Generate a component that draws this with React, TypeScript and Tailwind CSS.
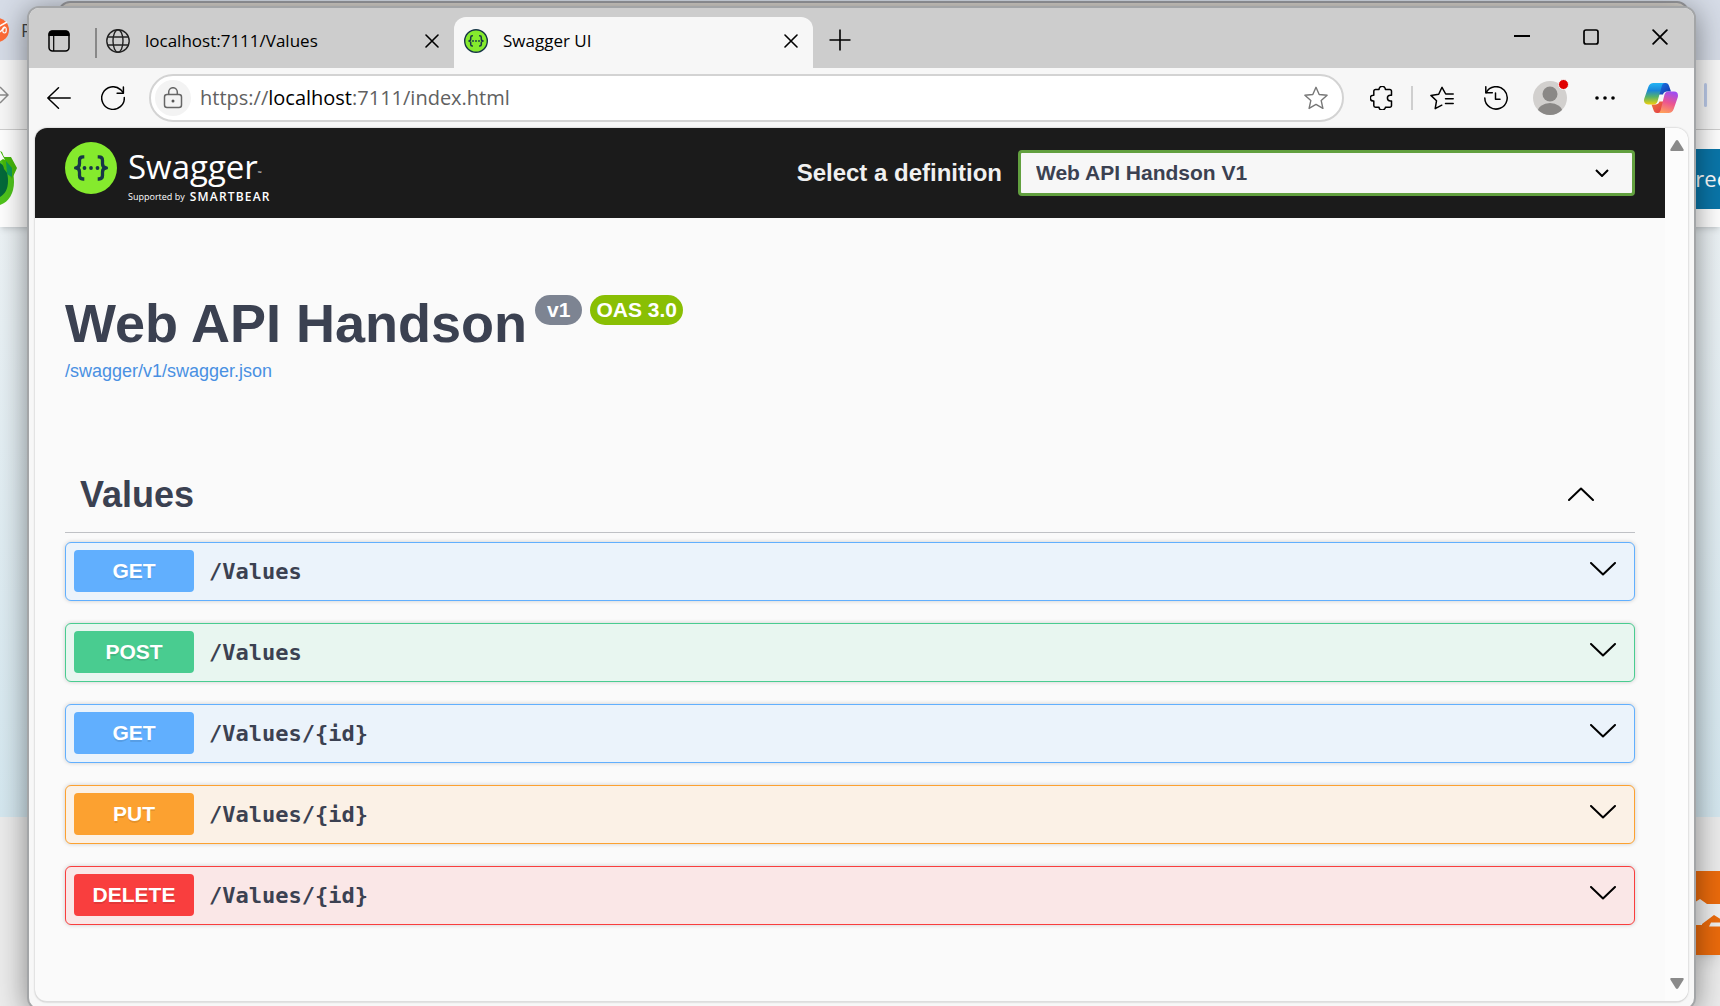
import React from "react";

type Method = "GET" | "POST" | "PUT" | "DELETE";

const methodStyles: Record<Method, { row: string; badge: string }> = {
  GET: { row: "border-[#61affe] bg-[#ebf3fb]", badge: "bg-[#61affe]" },
  POST: { row: "border-[#49cc90] bg-[#e8f6f0]", badge: "bg-[#49cc90]" },
  PUT: { row: "border-[#fca130] bg-[#fbf1e6]", badge: "bg-[#fca130]" },
  DELETE: { row: "border-[#f93e3e] bg-[#fae7e7]", badge: "bg-[#f93e3e]" },
};

const operations: { method: Method; path: string }[] = [
  { method: "GET", path: "/Values" },
  { method: "POST", path: "/Values" },
  { method: "GET", path: "/Values/{id}" },
  { method: "PUT", path: "/Values/{id}" },
  { method: "DELETE", path: "/Values/{id}" },
];

type IconProps = { className?: string };

function CloseIcon({ className }: IconProps) {
  return (
    <svg viewBox="0 0 14 14" className={className} fill="none" stroke="#000" strokeWidth="1.6" strokeLinecap="round">
      <path d="M1 1l12 12M13 1L1 13" />
    </svg>
  );
}

function WorkspacesIcon() {
  return (
    <svg viewBox="0 0 22 22" className="size-[22px]">
      <rect x="1" y="1" width="20" height="20" rx="3.5" fill="none" stroke="#000" strokeWidth="1.5" />
      <path d="M0.5 6V4a3.5 3.5 0 0 1 3.5-3.5h14A3.5 3.5 0 0 1 21.500 4v2z" fill="#000" />
      <path d="M5.700 6v15" stroke="#000" strokeWidth="1.2" />
    </svg>
  );
}

function GlobeIcon() {
  return (
    <svg viewBox="0 0 24 24" className="size-6 shrink-0" fill="none" stroke="#222" strokeWidth="1.4">
      <circle cx="12" cy="12" r="11.200" />
      <ellipse cx="12" cy="12" rx="5" ry="11.200" />
      <path d="M1.700 8h20.600M1.700 16h20.600" />
    </svg>
  );
}

function Braces({ className, ring }: IconProps & { ring?: boolean }) {
  return (
    <svg viewBox="0 0 52 52" className={className}>
      <circle cx="26" cy="26" r={ring ? 24.5 : 26} fill="#85ea2d" stroke={ring ? "#173647" : "none"} strokeWidth="3" />
      <g fill="none" stroke="#173647" strokeWidth="3.300" strokeLinejoin="round">
        <path d="M19.300 14.800H18c-2.600 0-3.500 1.200-3.500 3.400v3.600c0 2.600-1 4-3.900 4.100 2.900.1 3.900 1.500 3.900 4.100v3.600c0 2.200.9 3.400 3.500 3.400h1.300" />
        <path d="M32.700 14.800H34c2.600 0 3.500 1.200 3.500 3.400v3.600c0 2.600 1 4 3.900 4.100-2.900.1-3.900 1.500-3.900 4.100v3.600c0 2.200-.9 3.400-3.500 3.400h-1.300" />
      </g>
      <circle cx="19.500" cy="26" r="1.900" fill="#173647" />
      <circle cx="26" cy="26" r="1.900" fill="#173647" />
      <circle cx="32.500" cy="26" r="1.900" fill="#173647" />
    </svg>
  );
}

function BackIcon() {
  return (
    <svg viewBox="0 0 24 24" className="size-6" fill="none" stroke="#000" strokeWidth="1.5" strokeLinecap="round" strokeLinejoin="round">
      <path d="M23.200 12H.8M11.500 1.800L.8 12l10.700 10.200" />
    </svg>
  );
}

function RefreshIcon() {
  return (
    <svg viewBox="0 0 24 24" className="size-6" fill="none" stroke="#000" strokeWidth="1.5" strokeLinecap="round" strokeLinejoin="round">
      <path d="M23.300 11.500A11.300 11.300 0 1 1 19.500 3.600l2.500 2.700" />
      <path d="M22.400 1v6.200h-6.300" />
    </svg>
  );
}

function LockIcon() {
  return (
    <svg viewBox="0 0 20 22" className="h-[22px] w-5" fill="none" stroke="#666" strokeWidth="1.5">
      <rect x="1.500" y="7.500" width="17" height="13" rx="2.500" />
      <path d="M5.700 7.300V5a4.300 4.300 0 0 1 8.600 0v2.300" />
      <circle cx="10" cy="14" r="1.500" fill="#555" stroke="none" />
    </svg>
  );
}

function StarIcon() {
  return (
    <svg viewBox="0 0 24 24" className="size-6" fill="none" stroke="#777" strokeWidth="1.4" strokeLinejoin="round">
      <path d="M12 1.300l3.200 7.200 7.900.8-5.900 5.300 1.700 7.800-6.900-4-6.900 4 1.700-7.800L.9 9.300l7.900-.8z" />
    </svg>
  );
}

function PuzzleIcon() {
  return (
    <svg viewBox="0 0 24 24" className="size-6" fill="none" stroke="#000" strokeWidth="1.5" strokeLinejoin="round">
      <path d="M5.500 3.500H9a3.200 3.200 0 0 1 6.400 0h4.400a1.700 1.700 0 0 1 1.700 1.700v4h-1.200a2.900 2.900 0 0 0 0 5.800h1.200v4.600a1.700 1.700 0 0 1-1.700 1.700h-4.400a3.200 2.600 0 0 1-6.400 0H5.500a1.700 1.700 0 0 1-1.700-1.700V15h-.6a2.900 2.900 0 0 1 0-5.800h.6v-4a1.700 1.700 0 0 1 1.700-1.700z" />
    </svg>
  );
}

function FavoritesIcon() {
  return (
    <svg viewBox="0 0 24 24" className="size-6" fill="none" stroke="#000" strokeWidth="1.500" strokeLinejoin="round" strokeLinecap="round">
      <path d="M23.200 8h-7.500L12 1.300 8.700 8.300.9 9.400l5.600 5.400-1.300 7.900 6.600-3.500" />
      <path d="M15.500 12.700h7.700M15.500 17.500h7.700" />
    </svg>
  );
}

function HistoryIcon() {
  return (
    <svg viewBox="0 0 24 24" className="size-6" fill="none" stroke="#000" strokeWidth="1.5" strokeLinecap="round" strokeLinejoin="round">
      <path d="M2 6.800A11.200 11.200 0 1 1 .8 12" />
      <path d="M1.800 .8v6h6.500M11.500 7v6.200h4.500" />
    </svg>
  );
}

function AvatarIcon() {
  return (
    <svg viewBox="0 0 34 34" className="size-[34px]">
      <defs>
        <clipPath id="avatar-disc">
          <circle cx="17" cy="17" r="17" />
        </clipPath>
      </defs>
      <g clipPath="url(#avatar-disc)">
        <rect width="34" height="34" fill="#d2d0ce" />
        <circle cx="17" cy="13" r="7.500" fill="#8a8886" />
        <ellipse cx="17" cy="31.500" rx="12.500" ry="9.500" fill="#8a8886" />
      </g>
    </svg>
  );
}

function CopilotIcon() {
  return (
    <svg viewBox="0 0 34 30" className="h-[30px] w-[34px]">
      <defs>
        <linearGradient id="cp-left" x1="0" y1="0" x2="0" y2="1">
          <stop offset="0" stopColor="#22b4f4" />
          <stop offset=".35" stopColor="#1a86d8" />
          <stop offset=".65" stopColor="#58b368" />
          <stop offset="1" stopColor="#f0d00c" />
        </linearGradient>
        <linearGradient id="cp-top" x1="0" y1="0" x2="1" y2="1">
          <stop offset="0" stopColor="#1a7ce8" />
          <stop offset="1" stopColor="#1430a8" />
        </linearGradient>
        <linearGradient id="cp-right" x1=".6" y1="0" x2=".3" y2="1">
          <stop offset="0" stopColor="#a04df0" />
          <stop offset=".5" stopColor="#ec5590" />
          <stop offset="1" stopColor="#ffa05a" />
        </linearGradient>
        <linearGradient id="cp-bottom" x1="0" y1="0" x2="1" y2="1">
          <stop offset="0" stopColor="#f07838" />
          <stop offset="1" stopColor="#e0384a" />
        </linearGradient>
      </defs>
      <path d="M16 0h5.500c2 0 3 1 3.600 3l1.900 5.500h-4c-2 0-3.200.8-4 3l-5 0z" fill="url(#cp-top)" />
      <path d="M18 30h-5c-2 0-2.900-1-3.500-3L7.500 21.500h4c2 0 3.200-.8 4-3l4 0z" fill="url(#cp-bottom)" />
      <path d="M9.500 0H21c-1.700 0-2.600 1.200-3.200 3L13.500 18.500c-.7 2-2 3-4 3H4c-3.500 0-4.600-2.600-3.700-6L4.300 4C5.200 1.300 7 0 9.500 0z" fill="url(#cp-left)" />
      <path d="M24.500 30H13.500c1.700 0 2.600-1.200 3.200-3L20.500 11.500c.7-2 2-3 4-3H30c3.500 0 4.600 2.600 3.700 6L29.700 26c-.9 2.700-2.700 4-5.200 4z" fill="url(#cp-right)" />
    </svg>
  );
}

function Chevron({ up }: { up?: boolean }) {
  return (
    <svg viewBox="0 0 26 14" className="h-3.5 w-[26px]" fill="none" stroke="#000" strokeWidth="2" strokeLinecap="round" strokeLinejoin="round">
      <path d={up ? "M1 13L13 1.500 25 13" : "M1 1l12 11.500L25 1"} />
    </svg>
  );
}

function DesktopBackdrop() {
  return (
    <div aria-hidden="true" className="absolute inset-0 flex flex-col overflow-hidden bg-[#ececec]">
      <div className="flex h-[60px] shrink-0 items-center gap-3 bg-[#d6dce7]">
        <svg viewBox="0 0 9 24" className="h-6 w-[9px]">
          <circle cx="-3" cy="12" r="12" fill="#ff6c37" />
          <path d="M-2 9L7 4M0 14l5-5" stroke="#fff" strokeWidth="1.500" />
          <ellipse cx="4.500" cy="12" rx="1.800" ry="3" fill="none" stroke="#fff" strokeWidth="1.200" />
        </svg>
        <span className="text-lg text-[#444]">P</span>
      </div>
      <div className="flex h-[70px] shrink-0 items-center justify-between border-b border-[#cfcfcf] bg-[#f8f8f8]">
        <svg viewBox="0 0 9 18" className="h-[18px] w-[9px]" fill="none" stroke="#8a8a8a" strokeWidth="1.500">
          <path d="M0 9h8M0 1l8 8-8 8" />
        </svg>
        <span className="mr-[13px] h-6 w-[3px] rounded bg-[#bccbea]" />
      </div>
      <div className="relative flex h-[97px] shrink-0 items-center justify-between bg-white shadow-md">
        <svg viewBox="0 0 17 56" className="h-14 w-[17px]">
          <path d="M0 3C10 8 14 20 14 31S9 51 0 54z" fill="#4fc41c" />
          <path d="M0 12c6 4 8 10 8 18S5 43 0 46z" fill="#04693a" />
          <path d="M0 0l2 1 2 5h7l6 11-5 11-8-10z" fill="#46b80a" />
          <path d="M6 10l6 7 0 9-5-3z" fill="#0d9a55" />
          <path d="M0 0l5 9-2-1-3 2z" fill="#fff" />
        </svg>
        <span className="flex h-[60px] w-9 items-center bg-[#0a76a9] text-[22px] text-white">Free</span>
      </div>
      <div className="h-[590px] shrink-0 bg-linear-to-b from-[#edf3f6] to-[#d5e8f0]" />
      <div className="mt-[54px] flex h-[84px] w-7 shrink-0 items-center self-end bg-[#ec6b0c] shadow-lg">
        <svg viewBox="0 0 28 28" className="h-7 w-7">
          <path d="M0 5l8-5 7 5h13v22H0z" fill="#f0f0f0" />
          <path d="M10 28v-3l12-9 8 5v7zM0 28v-2h10v2z" fill="#ec6b0c" />
          <path d="M17 27.500l2-4h9v4z" fill="#f0f0f0" />
        </svg>
      </div>
    </div>
  );
}

function TabStrip() {
  return (
    <div className="flex h-[60px] shrink-0 items-end bg-[#cdcdcd] pt-2">
      <div className="flex h-[51px] flex-1 items-center">
        <button type="button" aria-label="Workspaces" className="ml-[19px] pb-1">
          <WorkspacesIcon />
        </button>
        <span className="ml-[25px] h-[30px] w-0.5 bg-[#888]" />
        <div className="flex h-full w-[357px] items-center pr-[15px] pb-1 pl-[9px]">
          <GlobeIcon />
          <span className="ml-[15px] flex-1 text-[17px]">localhost:7111/Values</span>
          <button type="button" aria-label="Close localhost:7111/Values">
            <CloseIcon className="size-3.5" />
          </button>
        </div>
        <div className="flex h-full w-[359px] items-center rounded-t-xl bg-[#f7f7f7] pr-[15px] pb-1 pl-2.5">
          <Braces className="size-6 shrink-0" ring />
          <span className="ml-[15px] flex-1 text-[17px]">Swagger UI</span>
          <button type="button" aria-label="Close Swagger UI">
            <CloseIcon className="size-3.5" />
          </button>
        </div>
        <button type="button" aria-label="New tab" className="ml-4 pb-1.5">
          <svg viewBox="0 0 22 22" className="size-[22px]" stroke="#000" strokeWidth="1.600">
            <path d="M0.500 11h21M11 .5v21" />
          </svg>
        </button>
      </div>
      <div className="mr-[26px] flex h-full items-start gap-[53px] pt-[13px]">
        <button type="button" aria-label="Minimize">
          <svg viewBox="0 0 16 16" className="size-4" stroke="#000" strokeWidth="2">
            <path d="M0 7h16" />
          </svg>
        </button>
        <button type="button" aria-label="Maximize">
          <svg viewBox="0 0 16 16" className="size-4" fill="none" stroke="#000" strokeWidth="1.700">
            <rect x="1" y="1" width="14" height="14" rx="2" />
          </svg>
        </button>
        <button type="button" aria-label="Close window">
          <CloseIcon className="size-4" />
        </button>
      </div>
    </div>
  );
}

function Toolbar() {
  return (
    <div className="flex h-[60px] shrink-0 items-center bg-[#f7f7f7] pr-4 pl-[18px]">
      <button type="button" aria-label="Back">
        <BackIcon />
      </button>
      <button type="button" aria-label="Refresh" className="ml-[30px]">
        <RefreshIcon />
      </button>
      <div className="ml-6 flex h-12 flex-1 items-center rounded-full border-2 border-[#d3d3d3] bg-white pr-3.5 pl-1">
        <button type="button" aria-label="View site information" className="flex size-9 items-center justify-center rounded-full bg-[#f3f3f3]">
          <LockIcon />
        </button>
        <a href="https://localhost:7111/index.html" className="ml-[9px] flex-1 text-xl text-[#616161]">
          https://<span className="text-black">localhost</span>:7111/index.html
        </a>
        <button type="button" aria-label="Add to favorites">
          <StarIcon />
        </button>
      </div>
      <button type="button" aria-label="Extensions" className="ml-[26px]">
        <PuzzleIcon />
      </button>
      <span className="ml-[17px] h-6 w-0.5 bg-[#cfcfcf]" />
      <button type="button" aria-label="Favorites" className="ml-[17px]">
        <FavoritesIcon />
      </button>
      <button type="button" aria-label="History" className="ml-[30px]">
        <HistoryIcon />
      </button>
      <button type="button" aria-label="Profile" className="relative ml-[25px]">
        <AvatarIcon />
        <span className="absolute -top-0.5 -right-0.5 size-[11px] rounded-full border border-[#f7f7f7] bg-[#e00000]" />
      </button>
      <button type="button" aria-label="More" className="ml-7">
        <svg viewBox="0 0 20 4" className="h-1 w-5">
          <circle cx="2" cy="2" r="1.800" />
          <circle cx="10" cy="2" r="1.800" />
          <circle cx="18" cy="2" r="1.800" />
        </svg>
      </button>
      <button type="button" aria-label="Copilot" className="ml-[29px]">
        <CopilotIcon />
      </button>
    </div>
  );
}

function Topbar() {
  return (
    <header className="flex h-[90px] items-center justify-between bg-[#1b1b1b] px-[30px] font-['Liberation_Sans',sans-serif]">
      <a href="#" className="flex items-start gap-[11px] font-['Open_Sans',sans-serif] text-white">
        <Braces className="size-[52px]" />
        <span className="flex flex-col pt-0.5">
          <span className="flex items-end text-[33px] leading-[45px]">
            Swagger<span className="text-[5px] leading-8">™</span>
          </span>
          <span className="flex items-center gap-[5px] text-[9px] leading-4">
            Supported by <b className="text-xs leading-4 font-semibold tracking-widest">SMARTBEAR</b>
          </span>
        </span>
      </a>
      <div className="flex items-center gap-4">
        <label htmlFor="definition" className="text-2xl font-bold text-[#f0f0f0]">
          Select a definition
        </label>
        <div className="relative">
          <select
            id="definition"
            className="h-[46px] w-[617px] appearance-none rounded border-3 border-[#62a03f] bg-[#f7f7f7] pr-14 pl-[15px] text-[21px] font-bold text-[#3b4151]"
          >
            <option>Web API Handson V1</option>
          </select>
          <svg viewBox="0 0 14 8" className="pointer-events-none absolute top-[19px] right-[26px] h-2 w-3.5" fill="none" stroke="#000" strokeWidth="2">
            <path d="M1 1l6 6 6-6" />
          </svg>
        </div>
      </div>
    </header>
  );
}

function Operation({ method, path }: { method: Method; path: string }) {
  const styles = methodStyles[method];
  return (
    <button
      type="button"
      className={`flex h-[59px] w-full items-center rounded-md border pr-[18px] pb-px pl-2 shadow-[0_0_4px_rgba(0,0,0,0.19)] ${styles.row}`}
    >
      <span
        className={`flex h-[42px] w-[120px] items-center justify-center rounded text-[21px] font-bold text-white [text-shadow:0_2px_0_rgba(0,0,0,0.1)] ${styles.badge}`}
      >
        {method}
      </span>
      <span className="ml-[15px] flex-1 text-left font-['DejaVu_Sans_Mono',monospace] text-[22px] font-bold">{path}</span>
      <span className="pb-1">
        <Chevron />
      </span>
    </button>
  );
}

function ApiPage() {
  return (
    <main className="flex-1 px-[30px] font-['Liberation_Sans',sans-serif] text-[#3b4151]">
      <div className="flex items-start gap-2 pt-[74px]">
        <h1 className="text-[54px] leading-[62px] font-bold">Web API Handson</h1>
        <span className="mt-[3px] flex h-[30px] items-center rounded-full bg-[#7d8492] px-3 text-[21px] font-bold text-white">v1</span>
        <span className="mt-[3px] flex h-[30px] items-center rounded-full bg-[#89bf04] px-1.5 text-[21px] font-bold text-white">OAS 3.0</span>
      </div>
      <a href="/swagger/v1/swagger.json" className="mt-[5px] block text-lg leading-6 text-[#4990e2]">
        /swagger/v1/swagger.json
      </a>
      <section className="mt-[74px]">
        <div className="flex h-[76px] items-center justify-between border-b border-[#bfc1c5] pr-[41px] pl-[15px]">
          <h2 className="text-4xl font-bold">Values</h2>
          <button type="button" aria-label="Collapse Values" className="pb-0.5">
            <Chevron up />
          </button>
        </div>
        <div className="mt-[9px] flex flex-col gap-[22px]">
          {operations.map((op, i) => (
            <Operation key={i} {...op} />
          ))}
        </div>
      </section>
    </main>
  );
}

export default function App() {
  return (
    <div className="relative flex h-screen flex-col overflow-hidden font-['Open_Sans','Noto_Sans',sans-serif] text-black">
      <DesktopBackdrop />
      <div className="absolute top-px right-[31px] left-[58px] h-8 rounded-t-xl border-2 border-[#9b9ca0] bg-[#d6d2cc]" />
      <div className="relative mt-1.5 mr-6 -mb-1 ml-[27px] flex flex-1 flex-col overflow-hidden rounded-xl border-2 border-[#a3a5a7] bg-[#f7f7f7] shadow-[0_4px_30px_rgba(0,0,0,0.45)]">
        <TabStrip />
        <Toolbar />
        <div className="mr-1.5 mb-1.5 ml-1.5 flex flex-1 overflow-hidden rounded-xl border-b border-[#ddd] bg-[#fafafa] shadow-[0_0_2px_rgba(0,0,0,0.3)]">
          <div className="flex flex-1 flex-col">
            <Topbar />
            <ApiPage />
          </div>
          <div className="flex w-[23px] flex-col items-center justify-between bg-[#fcfcfc] py-3">
            <svg viewBox="0 0 14 11" className="h-[11px] w-3.5">
              <path d="M5.800.8a1.500 1.500 0 0 1 2.400 0l5.300 8.500c.6 1 0 1.700-1 1.700h-11c-1 0-1.600-.7-1-1.700z" fill="#8a8a8a" />
            </svg>
            <svg viewBox="0 0 14 11" className="h-[11px] w-3.5">
              <path d="M5.800 10.200a1.500 1.500 0 0 0 2.400 0l5.300-8.500c.6-1 0-1.700-1-1.700h-11c-1 0-1.600.7-1 1.700z" fill="#8a8a8a" />
            </svg>
          </div>
        </div>
      </div>
    </div>
  );
}
